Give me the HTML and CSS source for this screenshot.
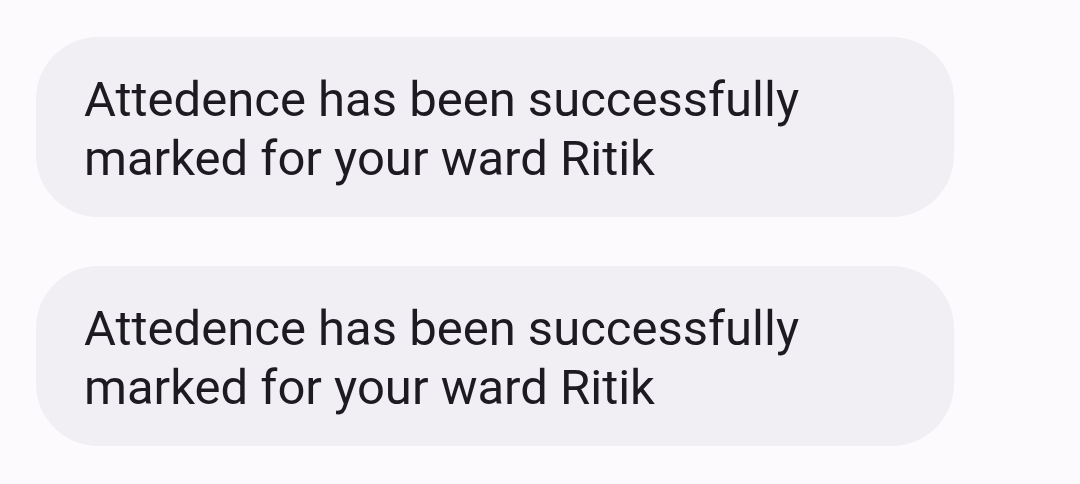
FILE: index.html
```html
<!DOCTYPE html>
<html lang="en">
<head>
<meta charset="utf-8">
<link rel="stylesheet" href="styles.css">
<title>Messages</title>
</head>
<body>
<div class="thread">
  <div class="bubble">Attedence has been successfully<br>marked for your ward Ritik</div>
  <div class="bubble">Attedence has been successfully<br>marked for your ward Ritik</div>
</div>
</body>
</html>
```
FILE: styles.css
```css
html, body {
  margin: 0;
  padding: 0;
  background: #fcfafd;
}
.thread {
  display: flex;
  flex-direction: column;
  align-items: flex-start;
  gap: 49px;
  padding: 37px 0 0 36px;
}
.bubble {
  box-sizing: border-box;
  width: 918px;
  height: 180px;
  padding: 33px 40px 0 48px;
  background: #f1eff4;
  border-radius: 62px;
  font-family: Roboto, "Noto Sans", sans-serif;
  font-size: 49px;
  line-height: 59px;
  color: #1d1b21;
}
```
